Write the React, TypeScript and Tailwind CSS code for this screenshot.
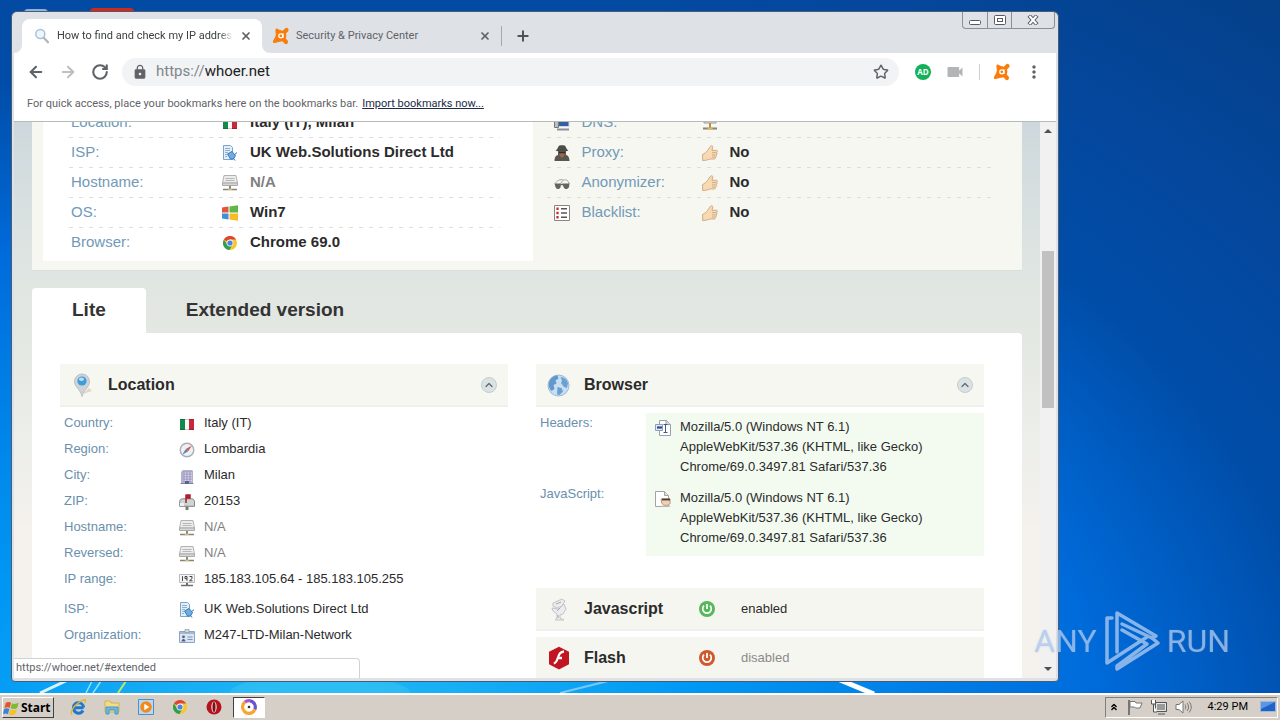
import type { ReactNode } from "react";
import {
  ArrowLeft,
  ArrowRight,
  ChevronUp,
  ChevronsUp,
  Plus,
  RotateCw,
  Star,
  X,
} from "lucide-react";
import { MdLock, MdMoreVert, MdVideocam } from "react-icons/md";

const ui = "font-['Roboto','Liberation_Sans',sans-serif]";
const page = "font-['Liberation_Sans',Arial,sans-serif]";

/* ---------- icons ---------- */

function AvastIcon() {
  return (
    <svg viewBox="0 0 18 18" className="size-[18px] shrink-0">
      <circle cx="9" cy="8.800" r="5.400" fill="#f97d0b" />
      <path d="M10 7.500 14.500 3M10 10.500l4 4.500" stroke="#f97d0b" strokeWidth="4.200" strokeLinecap="round" />
      <path d="M4 1.500c1-.6 3.500 1.300 6 2.300L4.500 9C3.500 6 3 2.500 4 1.500ZM4.200 8 1 14c-.4 1.300.4 2.300 1.700 2L11 14z" fill="#f97d0b" />
      <circle cx="8.800" cy="8.800" r="2" fill="none" stroke="#fff" strokeWidth="1.300" />
      <path d="M11 6.300v4.800" stroke="#fff" strokeWidth="1.200" />
    </svg>
  );
}

function MagnifierIcon() {
  return (
    <svg viewBox="0 0 16 16" className="size-4 shrink-0">
      <path d="m9.500 9.500 4.500 4.800" stroke="#b9b3ae" strokeWidth="2.200" strokeLinecap="round" />
      <circle cx="6.300" cy="6" r="4.500" fill="#eef6fd" stroke="#a9bfd6" strokeWidth="1.500" />
    </svg>
  );
}

function FlagItaly() {
  return (
    <svg viewBox="0 0 16 16" className="size-4 shrink-0">
      <path d="M1 3h5v11H1z" fill="#128a4b" />
      <path d="M6 3h4v11H6z" fill="#fafafa" />
      <path d="M10 3h5v11h-5z" fill="#c8283c" />
      <path d="M1 3.500h14M1 13.500h14" stroke="#00000030" />
    </svg>
  );
}

function IspIcon() {
  return (
    <svg viewBox="0 0 16 16" className="size-4 shrink-0">
      <path d="M1.500.5h7l2 2v12h-9z" fill="#e3eef8" stroke="#7fa3c6" />
      <path d="M3 3.500h5M3 5.500h5M3 7.500h3M3 9.500h2M3 11.500h2" stroke="#8fb0cf" />
      <path d="m5.500 9 4.500-2.500 3.500 4-2 3.500h-3z" fill="#6aaee6" stroke="#3a78b4" />
      <path d="M12.800 9.500 15 7.500M11.500 13.500l1.500 2" stroke="#3a6c9e" />
    </svg>
  );
}

function ServerIcon() {
  return (
    <svg viewBox="0 0 16 16" className="size-4 shrink-0">
      <path d="M2 .5h12l1.500 7.500H.5z" fill="#ececec" stroke="#b2b2b2" />
      <path d="M3.500 3.500h9M3.500 5.500h9" stroke="#b8b8b8" />
      <path d="M.5 8h15v2.500H.5z" fill="#d6d6d6" stroke="#aaa" />
      <path d="M8 11v3" stroke="#8b8878" strokeWidth="2" />
      <path d="M1 14.500h5M10 14.500h5" stroke="#85837a" strokeWidth="1.600" />
      <path d="M6 14.500h4" stroke="#cbb77f" strokeWidth="2" />
    </svg>
  );
}

function WindowsIcon() {
  return (
    <svg viewBox="0 0 16 16" className="size-4 shrink-0">
      <path d="M0 2.500 6.500 1.600v5.900H0z" fill="#e5533b" />
      <path d="M7.500 1.400 16 .2v7.300H7.500z" fill="#5cb947" />
      <path d="M0 8.500h6.500v5.900L0 13.500z" fill="#3e8fdc" />
      <path d="M7.500 8.500H16v7.300l-8.500-1.200z" fill="#fbbb26" />
    </svg>
  );
}

function ChromeIcon() {
  return (
    <svg viewBox="0 0 16 16" className="size-4 shrink-0">
      <circle cx="8" cy="8" r="7" fill="#f9c828" />
      <path d="M8 8 1.900 4.500A7 7 0 0 1 14.100 4.500H8Z" fill="#dc4437" />
      <path d="M1.900 4.500A7 7 0 0 0 7.500 15L10.500 9.500 5 9.600Z" fill="#2c9f56" />
      <circle cx="8" cy="8" r="3.400" fill="#f5f5f5" />
      <circle cx="8" cy="8" r="2.600" fill="#4a83e8" />
    </svg>
  );
}

function DnsIcon() {
  return (
    <svg viewBox="0 0 16 16" className="size-4 shrink-0">
      <path d="M4 3.500h11v8H4z" fill="#345fa8" stroke="#d5d9df" />
      <path d="M.5 5.500h4v7h-4z" fill="#b9bdc4" stroke="#777" />
      <path d="M3 14.500h12" stroke="#8d9199" strokeWidth="2" />
    </svg>
  );
}

function SpyIcon() {
  return (
    <svg viewBox="0 0 16 16" className="size-4 shrink-0">
      <path d="M.5 16c0-4 1.500-5.500 3.500-6V5h8v5c2 .5 3.500 2 3.500 6z" fill="#5a554e" />
      <path d="M5.500 5h5v5.500L8 13l-2.500-2.500z" fill="#96694a" />
      <path d="M1.500 5.500C4 4.500 4 1 5.500.5c2-.5 3-.5 5 0C12 1 12 4.500 14.500 5.500c-3 1.300-10 1.300-13 0Z" fill="#4b4d48" />
      <path d="M5 7.500h6" stroke="#2e2a28" strokeWidth="1.500" />
    </svg>
  );
}

function GlassesIcon() {
  return (
    <svg viewBox="0 0 16 16" className="size-4 shrink-0">
      <path d="M1 8.500C3 5.500 6 4 9.500 5M7 8c1.500-3 4-4 6.500-2.500L15.500 9" fill="none" stroke="#a5a5a5" />
      <path d="M.5 8.500h6.500l-.5 4c-2 2.500-4.500 1.500-5-.5zM8.500 8.500h7l-.5 3.500c-1.500 3-4.500 2.500-5.500 0z" fill="#62645f" />
      <path d="M6.500 9.500h2.500" stroke="#62645f" strokeWidth="1.500" />
    </svg>
  );
}

function BlacklistIcon() {
  return (
    <svg viewBox="0 0 16 16" className="size-4 shrink-0">
      <path d="M.5.5h15v15H.5z" fill="#fff" stroke="#8a8585" />
      <path d="M3.500 2.500v2.500M3.500 6.700v2.600M3.500 11v2.500" stroke="#c3282d" strokeWidth="2.200" />
      <path d="M7 3.800h6M7 8h6M7 12.300h6" stroke="#5a5555" strokeWidth="1.400" />
    </svg>
  );
}

function ThumbIcon() {
  return (
    <svg viewBox="0 0 16 16" className="size-4 shrink-0">
      <path
        d="M.6 9.500C2.500 8.500 4 7.500 5.500 5.500L8.500 1.200C9.500.2 11 .8 10.800 2.200L10 5.300h4.500c1.300.3 1.200 1.900 0 2.200.9.600.6 2-.3 2.300.6.800.2 1.900-.7 2.200.3 1-.3 1.900-1.300 2H8.500C6 14.500 4.500 15.600.6 15.500z"
        fill="#f7d9b4"
        stroke="#cda67c"
        strokeWidth=".9"
      />
      <path d="M10 7.600h4M10 9.900h3.600M10 12h3" stroke="#c29c72" strokeWidth=".7" />
    </svg>
  );
}

function NetworkNodeIcon() {
  return (
    <svg viewBox="0 0 16 16" className="size-4 shrink-0">
      <path d="M2 1h12v7H2z" fill="#e6e6e6" stroke="#999" />
      <path d="M8 8v5" stroke="#c98c2d" strokeWidth="2" />
      <path d="M1 13.500h14" stroke="#85837a" strokeWidth="2" />
      <path d="M5.500 13.500h5" stroke="#dcb45c" strokeWidth="2" />
    </svg>
  );
}

function PinIcon() {
  return (
    <svg viewBox="0 0 24 24" className="size-6 shrink-0">
      <path d="m12 21 9-3-3-3z" fill="#e4d5c8" />
      <path d="M11 23.500C10 17 3.500 14 3.500 8.500a7.500 7.500 0 0 1 15 0C18.500 14 12.500 17 11 23.500Z" fill="#ced3d8" stroke="#bac0c6" />
      <circle cx="11" cy="8" r="4.600" fill="#3f9cd9" />
      <ellipse cx="10.500" cy="6.300" rx="2.600" ry="1.700" fill="#b7e0f7" />
    </svg>
  );
}

function GlobeIcon() {
  return (
    <svg viewBox="0 0 24 24" className="size-6 shrink-0">
      <circle cx="11.500" cy="12.500" r="10.500" fill="#c8def2" stroke="#9db9d4" />
      <path d="M2.500 8c2-4 5-5.500 8-5.500l1 3-3 2 1 3-3 1.500 1 4-3 2C1.500 15 1 11 2.500 8Z" fill="#6398cc" />
      <path d="M13.500 4c4 .3 6.500 3 7.500 6l-1 5-3-1-3-4 1-2.500zM10.500 14l4 1 1.500 3.500-3.500 3.500-2.500-.5z" fill="#6ba0d2" />
    </svg>
  );
}

function CompassIcon() {
  return (
    <svg viewBox="0 0 16 16" className="size-4 shrink-0">
      <circle cx="8" cy="8" r="6.800" fill="#eef0f2" stroke="#a9aeb3" strokeWidth="1.400" />
      <path d="m13 3.500-3.800 5.800-2.400-2.400z" fill="#d05a50" />
      <path d="m3.200 12.800 3.600-5.900 2.400 2.400z" fill="#5a83b8" />
    </svg>
  );
}

function BuildingIcon() {
  return (
    <svg viewBox="0 0 16 16" className="size-4 shrink-0">
      <path d="M4 2h9l1 1v13H2V4z" fill="#b4b1d0" />
      <path d="M4 5h9M4 7.500h9M4 10h9M4 12.500h9" stroke="#dcdaee" />
      <path d="M5 3v11M8 3v11M11 3v11" stroke="#9592b8" />
      <path d="M1.500 15.500h13" stroke="#8582a6" />
      <path d="M6 13h4v3H6z" fill="#59638f" />
    </svg>
  );
}

function MailboxIcon() {
  return (
    <svg viewBox="0 0 16 16" className="size-4 shrink-0">
      <path d="M.7 7.500C.7 5.500 2 4.800 3.500 4.800h9c2 0 3 1.200 3 3v4.500H.7z" fill="#cfd4d4" stroke="#7d8585" />
      <path d="M1 9h4v3H1z" fill="#eef0f0" />
      <path d="M7 .5v8.500M8 1h3v3H8z" fill="#c41f2c" stroke="#b01b28" strokeWidth="1.500" />
      <path d="M8 12.500V16" stroke="#7d7a70" strokeWidth="3" />
    </svg>
  );
}

function IpIcon() {
  return (
    <svg viewBox="0 0 16 16" className="size-4 shrink-0">
      <path d="M.5 2.500h15v8H.5z" fill="#f5f5f5" stroke="#bbb" />
      <path d="M3.500 4.200v4.800M8 8.800V4.500H6v2.200h2M10.500 4.500h2.500v2l-2.500 2.300h3" fill="none" stroke="#444" />
      <path d="M8 11v2" stroke="#5f6d68" strokeWidth="2" />
      <path d="M2 13.500h12" stroke="#69706d" strokeWidth="1.500" />
    </svg>
  );
}

function CardIcon() {
  return (
    <svg viewBox="0 0 16 16" className="size-4 shrink-0">
      <path d="M.5 3.500h15v11H.5z" fill="#d9e5f3" stroke="#8fa5c4" />
      <path d="M1 4h14v2H1z" fill="#a5b9d6" />
      <path d="M6 1.500h4v3H6z" fill="#d5d8dc" stroke="#8f979f" strokeWidth=".7" />
      <circle cx="4.500" cy="8.800" r="1.400" fill="#56617a" />
      <path d="M2.500 13.500c0-3.500 4-3.500 4 0z" fill="#56617a" />
      <path d="M8.500 9h5M8.500 11.500h5" stroke="#7b93b5" />
    </svg>
  );
}

function HeadersIcon() {
  return (
    <svg viewBox="0 0 16 16" className="size-4 shrink-0">
      <path d="M4.500.5h7l4 4v11h-11z" fill="#fff" stroke="#9aa0aa" />
      <path d="M11 .5v4h4.500" fill="#d5dbe6" stroke="#9aa0aa" />
      <path d="M.5 4.500h7v6h-7z" fill="#e5ebf5" stroke="#8c9dbe" />
      <path d="M2 7.500h5" stroke="#2d4a8a" strokeWidth="2.200" />
      <path d="M8.500 4.500h4M8.500 12.500h4M10.500 4.500v8" stroke="#41598c" />
    </svg>
  );
}

function ScriptIcon() {
  return (
    <svg viewBox="0 0 16 16" className="size-4 shrink-0">
      <path d="M.5.5h9l4 4v11H.5z" fill="#fff" stroke="#a3a3a3" />
      <path d="M9.500.5v4h4" fill="#dedede" stroke="#a3a3a3" />
      <path d="M6 8h9v4.500c-1 2.500-7 2.500-8 0z" fill="#e9d3bd" stroke="#b9946f" />
      <path d="M7 8.500h8" stroke="#5a3424" strokeWidth="1.800" />
      <path d="M5 15.200h10.500" stroke="#c7beb4" />
    </svg>
  );
}

function SculptureIcon() {
  return (
    <svg viewBox="0 0 24 24" className="size-6 shrink-0">
      <path d="m6 6 9-4 3 2-3 5-5 2-4-2zM5 11l7 1 5-5 2 5-3 5-3 1v3l4 2H8l2-2v-4l-4-3z" fill="#ebecee" stroke="#c2c4c7" />
      <path d="m9 7 5-2M10 14l3-3M11 18v3" stroke="#a4a6aa" />
    </svg>
  );
}

function FlashIcon() {
  return (
    <svg viewBox="0 0 24 24" className="size-6 shrink-0">
      <path d="m12 .8 10 5v12.500L12 23.500 2 18.300V5.800z" fill="#c11622" />
      <path d="M17 5.500c-4 .2-5 3-6.200 6.500-.9 2.800-1.800 5-4 5.500M10.500 12H15" fill="none" stroke="#fff" strokeWidth="2.300" />
    </svg>
  );
}

function PowerIcon({ color }: { color: string }) {
  return (
    <svg viewBox="0 0 16 16" className="size-4 shrink-0">
      <circle cx="8" cy="8" r="8" fill={color} />
      <path d="M5 4.700a4.300 4.300 0 1 0 6 0" fill="none" stroke="#fff" strokeWidth="1.700" />
      <path d="M8 3v5" stroke="#fff" strokeWidth="1.800" />
    </svg>
  );
}

/* ---------- browser chrome ---------- */

function TabStrip() {
  return (
    <div className={`flex h-[41px] items-end pl-2 text-[11px] ${ui}`}>
      <div className="relative flex h-[34px] w-60 items-center gap-[7px] rounded-t-lg bg-white pr-[10px] pl-3 text-[#3c4043]">
        <MagnifierIcon />
        <span className="flex-1 overflow-hidden whitespace-nowrap [mask-image:linear-gradient(90deg,#000_92%,transparent)]">
          How to find and check my IP address
        </span>
        <button aria-label="Close tab" className="text-[#5f6368]">
          <X className="size-3" strokeWidth={3.5} />
        </button>
        <svg viewBox="0 0 8 8" className="absolute bottom-0 -left-2 size-2">
          <path d="M8 0v8H0a8 8 0 0 0 8-8Z" fill="#fff" />
        </svg>
        <svg viewBox="0 0 8 8" className="absolute -right-2 bottom-0 size-2">
          <path d="M0 0v8h8a8 8 0 0 1-8-8Z" fill="#fff" />
        </svg>
      </div>
      <div className="flex h-[34px] w-[239px] items-center gap-[6px] pr-[10px] pl-[10px] text-[#5f6368]">
        <AvastIcon />
        <span className="flex-1 whitespace-nowrap">Security &amp; Privacy Center</span>
        <button aria-label="Close tab">
          <X className="size-3" strokeWidth={3.5} />
        </button>
      </div>
      <div className="mb-[7px] h-5 w-px bg-[#a5a8ad]" />
      <button aria-label="New tab" className="mb-[9px] ml-[13px] text-[#4f5358]">
        <Plus className="size-4" strokeWidth={3} />
      </button>
    </div>
  );
}

function WindowButtons() {
  return (
    <div className="absolute top-0 right-[3px] flex h-[17px] divide-x divide-[#8b8f98] rounded-b border border-t-0 border-[#8b8f98]">
      <button aria-label="Minimize" className="flex w-[25px] items-center justify-center pt-1">
        <svg viewBox="0 0 12 5" className="h-[5px] w-3">
          <rect x=".5" y=".5" width="11" height="4" rx="1" fill="#fff" stroke="#555a66" />
        </svg>
      </button>
      <button aria-label="Restore" className="flex w-6 items-center justify-center">
        <svg viewBox="0 0 12 10" className="h-[10px] w-3">
          <rect x=".5" y=".5" width="11" height="9" rx="1" fill="#fff" stroke="#555a66" />
          <rect x="3.500" y="3.500" width="5" height="3" fill="#fff" stroke="#555a66" />
        </svg>
      </button>
      <button aria-label="Close" className="flex w-[42px] items-center justify-center">
        <svg viewBox="0 0 12 10" className="h-[10px] w-3">
          <path d="m2 .5 8 9M10 .5l-8 9" stroke="#555a66" strokeWidth="4" />
          <path d="m2.500 1 7 8M9.500 1l-7 8" stroke="#fff" strokeWidth="2" />
        </svg>
      </button>
    </div>
  );
}

function Toolbar() {
  return (
    <div className="flex h-[37px] items-center bg-white pl-[13px] text-[#5f6368]">
      <button aria-label="Back" className="mr-[14px]">
        <ArrowLeft className="size-[18px]" strokeWidth={2.8} />
      </button>
      <button aria-label="Forward" className="mr-[14px] text-[#bdbfc2]">
        <ArrowRight className="size-[18px]" strokeWidth={2.8} />
      </button>
      <button aria-label="Reload" className="mr-[13px]">
        <RotateCw className="size-[18px]" strokeWidth={2.8} />
      </button>
      <label className={`flex h-7 flex-1 items-center rounded-full bg-[#f1f3f4] px-[10px] text-[15px] ${ui}`}>
        <MdLock className="mr-2 size-4" />
        <span className="text-[#80868b]">https://</span>
        <input
          aria-label="Address"
          defaultValue="whoer.net"
          className="min-w-0 flex-1 bg-transparent text-[#202124] outline-none"
        />
        <button aria-label="Bookmark this page">
          <Star className="size-4" strokeWidth={2.2} />
        </button>
      </label>
      <button
        aria-label="Ad blocker"
        className="ml-4 size-4 rounded-full bg-[#12b15a] text-center font-['Open_Sans',sans-serif] text-[8px] leading-4 font-bold text-white"
      >
        AD
      </button>
      <button aria-label="Video" className="ml-[14px] text-[#b2b4b6]">
        <MdVideocam className="size-5" />
      </button>
      <div className="mr-[13px] ml-[14px] h-4 w-px bg-[#ccced1]" />
      <button aria-label="Avast">
        <AvastIcon />
      </button>
      <button aria-label="Menu" className="mr-3 ml-[13px]">
        <MdMoreVert className="size-5" />
      </button>
    </div>
  );
}

/* ---------- page ---------- */

function SummaryRow({ icon, label, valueIcon, value, muted, narrow }: {
  icon?: ReactNode;
  label: string;
  valueIcon: ReactNode;
  value?: string;
  muted?: boolean;
  narrow?: boolean;
}) {
  return (
    <div className="group">
      <div className={`flex h-[29px] items-center text-[15px] ${narrow ? "pl-[7px]" : "pl-[2px]"}`}>
        {icon && <span className="mr-3">{icon}</span>}
        <dt className={`text-[#7199b8] ${narrow ? "w-30" : "w-[151px]"}`}>{label}</dt>
        <dd className={`flex items-center gap-3 font-bold ${muted ? "text-[#808080]" : "text-[#2b2b2b]"}`}>
          {valueIcon}
          {value}
        </dd>
      </div>
      <div className="h-px bg-[repeating-linear-gradient(90deg,#dcdfdc_0_4px,transparent_4px_10px)] group-last:bg-none" />
    </div>
  );
}

function Summary() {
  return (
    <section className="-mt-[14px] grid grid-cols-2 border-b border-[#dadfda] bg-[#f6f7f1] pb-[9px] pl-[11px]">
      <dl className="bg-white pr-[33px] pb-[3px] pl-[26px]">
        <SummaryRow label="Location:" valueIcon={<FlagItaly />} value="Italy (IT), Milan" />
        <SummaryRow label="ISP:" valueIcon={<IspIcon />} value="UK Web.Solutions Direct Ltd" />
        <SummaryRow label="Hostname:" valueIcon={<ServerIcon />} value="N/A" muted />
        <SummaryRow label="OS:" valueIcon={<WindowsIcon />} value="Win7" />
        <SummaryRow label="Browser:" valueIcon={<ChromeIcon />} value="Chrome 69.0" />
      </dl>
      <dl className="pr-[29px] pl-[14px]">
        <SummaryRow narrow icon={<DnsIcon />} label="DNS:" valueIcon={<NetworkNodeIcon />} />
        <SummaryRow narrow icon={<SpyIcon />} label="Proxy:" valueIcon={<ThumbIcon />} value="No" />
        <SummaryRow narrow icon={<GlassesIcon />} label="Anonymizer:" valueIcon={<ThumbIcon />} value="No" />
        <SummaryRow narrow icon={<BlacklistIcon />} label="Blacklist:" valueIcon={<ThumbIcon />} value="No" />
      </dl>
    </section>
  );
}

function PanelHeader({ icon, title }: { icon: ReactNode; title: string }) {
  return (
    <header className="flex h-[43px] items-center gap-[13px] border-b-2 border-[#eef0ec] bg-[#f7f7f1] px-[11px]">
      {icon}
      <h2 className="flex-1 text-base font-bold text-[#2b2b2b]">{title}</h2>
      <button
        aria-label={`Collapse ${title}`}
        className="flex size-4 items-center justify-center rounded-full border border-[#c3cdcf] bg-[#dbe2e3] text-[#5d6a70]"
      >
        <ChevronUp className="size-3" strokeWidth={2.5} />
      </button>
    </header>
  );
}

const locationRows = [
  { label: "Country:", icon: <FlagItaly />, value: "Italy (IT)" },
  { label: "Region:", icon: <CompassIcon />, value: "Lombardia" },
  { label: "City:", icon: <BuildingIcon />, value: "Milan" },
  { label: "ZIP:", icon: <MailboxIcon />, value: "20153" },
  { label: "Hostname:", icon: <ServerIcon />, value: "N/A" },
  { label: "Reversed:", icon: <ServerIcon />, value: "N/A" },
  { label: "IP range:", icon: <IpIcon />, value: "185.183.105.64 - 185.183.105.255", last: true },
  { label: "ISP:", icon: <IspIcon />, value: "UK Web.Solutions Direct Ltd" },
  { label: "Organization:", icon: <CardIcon />, value: "M247-LTD-Milan-Network" },
];

function LocationPanel() {
  return (
    <section>
      <PanelHeader icon={<PinIcon />} title="Location" />
      <dl className="mt-[3px] pl-1 text-[13px]">
        {locationRows.map((row) => (
          <div key={row.label} className={`flex ${row.last ? "mb-1" : ""}`}>
            <dt className="w-[115px] leading-[26px] text-[#6a8fae]">{row.label}</dt>
            <dd className={`flex gap-[9px] leading-[26px] ${row.value === "N/A" ? "text-[#808080]" : "text-[#2b2b2b]"}`}>
              <span className="pt-[6px]">{row.icon}</span>
              {row.value}
            </dd>
          </div>
        ))}
      </dl>
    </section>
  );
}

function UserAgent() {
  return (
    <span>
      Mozilla/5.0 (Windows NT 6.1)
      <br />
      AppleWebKit/537.36 (KHTML, like Gecko)
      <br />
      Chrome/69.0.3497.81 Safari/537.36
    </span>
  );
}

function FeatureBar({ icon, title, color, state, muted }: {
  icon: ReactNode;
  title: string;
  color: string;
  state: string;
  muted?: boolean;
}) {
  return (
    <div className="mb-[6px] flex h-[43px] items-center border-b-2 border-[#eef0ec] bg-[#f6f6f0] pl-[11px]">
      {icon}
      <h2 className="ml-[13px] w-[115px] text-base font-bold text-[#2b2b2b]">{title}</h2>
      <PowerIcon color={color} />
      <span className={`ml-[26px] text-[13px] ${muted ? "text-[#8a8a8a]" : "text-[#2b2b2b]"}`}>{state}</span>
    </div>
  );
}

function BrowserPanel() {
  return (
    <section>
      <PanelHeader icon={<GlobeIcon />} title="Browser" />
      <dl className="mt-[6px] mb-8 grid grid-cols-[106px_1fr] pl-1 text-[13px] leading-5 text-[#2b2b2b]">
        <dt className="text-[#6a8fae]">Headers:</dt>
        <dd className="flex gap-[9px] bg-[#f3fbf1] px-[9px] pt-1 pb-[7px]">
          <span className="pt-[3px]">
            <HeadersIcon />
          </span>
          <UserAgent />
        </dd>
        <dt className="text-[#6a8fae]">JavaScript:</dt>
        <dd className="flex gap-[9px] bg-[#f3fbf1] px-[9px] pt-1 pb-2">
          <span className="pt-[3px]">
            <ScriptIcon />
          </span>
          <UserAgent />
        </dd>
      </dl>
      <FeatureBar icon={<SculptureIcon />} title="Javascript" color="#55b85a" state="enabled" />
      <FeatureBar icon={<FlashIcon />} title="Flash" color="#cf592e" state="disabled" muted />
    </section>
  );
}

function WhoerPage() {
  return (
    <div
      className={`h-full overflow-hidden bg-[linear-gradient(180deg,#ced8dc_0px,#dfe5e2_150px,#e4e8e2_220px,#ebeee9_310px,#f5f1ed_410px)] ${page}`}
    >
      <div className="mx-auto max-w-[990px]">
        <Summary />
        <nav className="mt-[17px] flex h-[45px] items-center text-[19px] font-bold text-[#333]">
          <a href="#lite" className="flex h-full items-center rounded-t bg-white px-10">
            Lite
          </a>
          <a href="#extended" className="px-10">
            Extended version
          </a>
        </nav>
        <main className="grid grid-cols-2 gap-7 rounded-tr bg-white pt-[31px] pr-[38px] pb-10 pl-7">
          <LocationPanel />
          <BrowserPanel />
        </main>
      </div>
    </div>
  );
}

function Scrollbar() {
  return (
    <div className="flex w-4 shrink-0 flex-col items-center bg-[#f1f1f1] py-[7px]">
      <svg viewBox="0 0 8 4" className="h-1 w-2 shrink-0">
        <path d="M0 4h8L4 0z" fill="#505050" />
      </svg>
      <div className="flex w-full flex-1 justify-center pt-[118px]">
        <div className="h-[157px] w-3 bg-[#c1c1c1]" />
      </div>
      <svg viewBox="0 0 8 4" className="h-1 w-2 shrink-0">
        <path d="M0 0h8L4 4z" fill="#505050" />
      </svg>
    </div>
  );
}

function BrowserWindow() {
  return (
    <div className="absolute top-[11px] right-[221px] bottom-[11px] left-[11px] flex flex-col rounded-t-md rounded-b border border-[#4b5c70] bg-[#dee1e6] px-[2px] pb-[3px]">
      <WindowButtons />
      <TabStrip />
      <Toolbar />
      <div className={`flex h-8 items-center gap-1 border-b border-[#b3bbbb] bg-white pb-[3px] pl-[13px] text-[11px] text-[#5f6368] ${ui}`}>
        <span>For quick access, place your bookmarks here on the bookmarks bar.</span>
        <a href="#import" className="text-[#202b45] underline">
          Import bookmarks now...
        </a>
      </div>
      <div className="relative flex min-h-0 flex-1">
        <div className="min-w-0 flex-1">
          <WhoerPage />
        </div>
        <Scrollbar />
        <div className={`absolute bottom-0 left-0 flex h-5 w-[346px] items-center rounded-tr border-t border-r border-[#d0d2d4] bg-white pl-[2px] text-[11px] text-[#5f6368] ${ui}`}>
          https://whoer.net/#extended
        </div>
      </div>
    </div>
  );
}

/* ---------- desktop ---------- */

function Watermark() {
  return (
    <div className="pointer-events-none absolute right-[50px] bottom-[21px] flex items-center gap-[7px] font-['Roboto','Liberation_Sans',sans-serif] text-[32px] leading-[60px] text-[#a9c8f0] opacity-80 [text-shadow:0_0_2px_#7f8b9966]">
      <span>ANY</span>
      <svg viewBox="0 0 56 62" className="h-[62px] w-14" fill="none" stroke="currentColor" strokeWidth="3.500" strokeLinejoin="round" strokeLinecap="round">
        <path d="M13 42V3l39 23-4 2L18 14" />
        <path d="M8 8H3v45l40-26" />
        <path d="M48 28 54 33 13 59v-3l30-22-25-14" />
      </svg>
      <span>RUN</span>
    </div>
  );
}

function Wallpaper() {
  return (
    <svg viewBox="0 0 1280 14" className="absolute bottom-0 left-0 w-full" fill="none">
      <ellipse cx="320" cy="14" rx="90" ry="18" fill="#6fe0f2" opacity=".2" />
      <path d="M40 14 68 1" stroke="#d5f4ff" strokeWidth="3" />
      <path d="m86 14 6-12M93 14l8-12" stroke="#8fe3fb" strokeWidth="1.500" />
      <path d="m118 14 8-12" stroke="#b9e86a" strokeWidth="2" />
      <path d="M560 14 612 1" stroke="#7cc8f8" strokeWidth="2" />
      <path d="m840 1 34 14" stroke="#fff" strokeWidth="5" />
    </svg>
  );
}

function Taskbar() {
  return (
    <div className={`flex h-[27px] items-center border-t-2 border-white bg-[#d5cfc8] px-[2px] pb-px text-[12px] text-black ${ui}`}>
      <button className="mt-px flex h-[21px] w-[52px] items-center gap-px border border-t-white border-r-[#404040] border-b-[#404040] border-l-white font-['Noto_Sans',sans-serif] text-[12px] font-bold">
        <svg viewBox="0 0 18 16" className="h-4 w-[17px]">
          <path d="M3 2.500C5 1 7 1.500 8.500 2.500L7 8C5.500 7 3.500 7 1.500 8z" fill="#e5532a" />
          <path d="M9.500 3C11.500 4 13.500 4 16.500 2.500L15 8c-2 1.300-4.500 1.300-7 .3z" fill="#7fba2f" />
          <path d="M1.200 9C3 8 5 8 6.700 9l-1.500 5.500C3.700 13.500 2 13.500 0 14.300z" fill="#3b82d6" />
          <path d="M7.700 9.500c2.500 1 4.500.9 7-.3L13 14.500c-2 1.200-4.500 1.500-6.700.5z" fill="#f6c02d" />
        </svg>
        Start
      </button>
      <div className="ml-4 flex flex-1 items-center gap-[18px]">
        <button aria-label="Internet Explorer">
          <svg viewBox="0 0 16 16" className="size-4">
            <path d="M4.500 8.700h9M13 11.500c-2.500 4.500-9.500 3-9.500-3 0-6.500 10-6 10 0" fill="none" stroke="#1e78d0" strokeWidth="3" />
            <path d="M2 15.500C-.5 13 5 4 14 .8c2.500-.5 1.300 2 .5 3" fill="none" stroke="#e3b52f" strokeWidth="1.400" />
          </svg>
        </button>
        <button aria-label="Explorer">
          <svg viewBox="0 0 16 16" className="size-4">
            <path d="M1 2h5l1 2h8v9H1z" fill="#f5dc85" stroke="#d0b155" />
            <path d="M2 8h12v7h-3v-4H5v4H2z" fill="#6db8e0" stroke="#4a98c6" />
          </svg>
        </button>
        <button aria-label="Media Player">
          <svg viewBox="0 0 16 16" className="size-4">
            <path d="M.5.5h15v15H.5z" fill="#b9d8f3" stroke="#4f8ecb" />
            <circle cx="8" cy="8" r="5.800" fill="#f18a1d" />
            <path d="m6.300 4.800 5 3.200-5 3.200z" fill="#fff" />
          </svg>
        </button>
        <button aria-label="Chrome">
          <ChromeIcon />
        </button>
        <button aria-label="Opera">
          <svg viewBox="0 0 16 16" className="size-4">
            <circle cx="8" cy="8" r="7.500" fill="#b5121b" />
            <ellipse cx="8" cy="8" rx="2.700" ry="5.500" fill="#e9dede" />
            <ellipse cx="8" cy="8" rx="1.500" ry="5" fill="#7c1015" />
          </svg>
        </button>
        <button aria-label="Avast Secure Browser" className="-ml-[7px] flex h-[21px] w-8 items-center justify-center border border-t-[#404040] border-r-white border-b-white border-l-[#404040] bg-white">
          <svg viewBox="0 0 16 16" className="size-4" fill="none" strokeWidth="3.200">
            <path d="M2.400 11A6.300 6.300 0 0 1 4 3" stroke="#f8a52b" />
            <path d="M4 3a6.300 6.300 0 0 1 5-1.200" stroke="#b04fd0" />
            <path d="M9 1.800a6.300 6.300 0 0 1 4.800 8.700" stroke="#6b52d0" />
            <path d="M13.800 10.500A6.300 6.300 0 0 1 2.400 11" stroke="#f8a52b" />
            <circle cx="8" cy="8" r="1.300" fill="#333" />
          </svg>
        </button>
      </div>
      <div className="flex h-[21px] items-center border border-t-[#808080] border-r-white border-b-white border-l-[#808080] pr-px pl-[3px] text-[11px]">
        <ChevronsUp className="size-[10px]" strokeWidth={3.5} />
        <svg viewBox="0 0 16 16" className="ml-2 size-4">
          <path d="M2 1v15" stroke="#777" strokeWidth="2" />
          <path d="M3 2.500h5l1 1.500h6l-2 5H8.500L7.500 8H3z" fill="#fff" stroke="#777" />
        </svg>
        <svg viewBox="0 0 16 16" className="ml-2 size-4">
          <path d="M4.500 3.500h11v9h-11z" fill="#9a9a9a" stroke="#555" />
          <path d="M5.500 4.500h9v7h-9z" stroke="#e8e8e8" fill="none" />
          <path d="M7 15h7" stroke="#555" />
          <path d="M.5 1v4h4V1M2.500 5v8H6" fill="#fff" stroke="#555" />
        </svg>
        <svg viewBox="0 0 17 16" className="ml-2 h-4 w-[17px]">
          <path d="M1 5.500h3L8 2v12l-4-3.500H1z" fill="#fff" stroke="#777" />
          <path d="M10 5.500c1 1.500 1 3.500 0 5M12 4c2 2.500 2 5.500 0 8M14 2.500c3 3.500 3 7.500 0 11" fill="none" stroke="#777" />
        </svg>
        <span className="mr-3 ml-4 whitespace-nowrap">4:29 PM</span>
        <button aria-label="Show desktop">
          <svg viewBox="0 0 16 14" className="h-[14px] w-4">
            <path d="M.5 1.500h15v10H.5z" fill="#1f62c8" stroke="#9fb9dd" />
            <path d="M1 2h14L1 9z" fill="#5b96e6" />
          </svg>
        </button>
      </div>
    </div>
  );
}

export default function App() {
  return (
    <div className="flex h-screen w-full flex-col overflow-hidden">
      <div className="relative flex-1 bg-[radial-gradient(ellipse_92%_120%_at_25%_110%,#28c0f6_0%,#0098f4_33%,#006cdc_66%,#004da8_86%,#04489f_100%,#053d82_130%)]">
        <div className="absolute top-2 left-[90px] h-3 w-11 rounded-t bg-[#d5261c]" />
        <div className="absolute top-[9px] left-6 h-3 w-6 rounded-t bg-[#8fb2dd]" />
        <Wallpaper />
        <BrowserWindow />
        <Watermark />
      </div>
      <Taskbar />
    </div>
  );
}
